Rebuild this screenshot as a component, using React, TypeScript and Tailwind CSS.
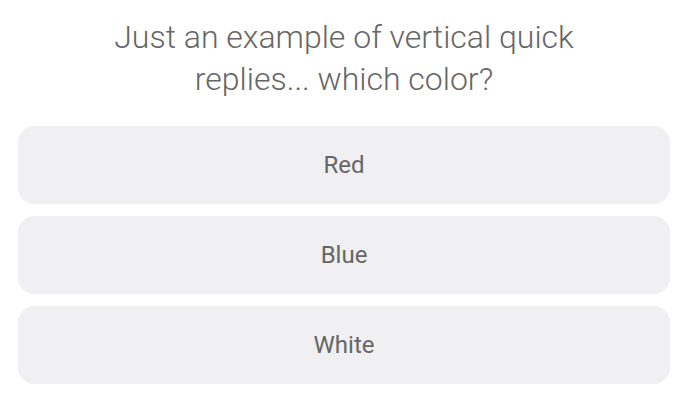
export default function App() {
  const options = ["Red", "Blue", "White"];
  return (
    <div className="w-[692px] h-[420px] bg-white font-['Roboto',sans-serif]">
      <div className="pt-[16px] pl-[18px] pr-[22px]">
        <p className="mx-auto w-[480px] text-center text-[32px] leading-[42px] font-light text-[#666666]">
          Just an example of vertical quick replies... which color?
        </p>
        <div className="mt-[26px] flex flex-col gap-[12px]">
          {options.map((o) => (
            <button
              key={o}
              type="button"
              className="h-[78px] w-full rounded-[16px] bg-[#f0f0f2] text-[24px] text-[#666666]"
            >
              {o}
            </button>
          ))}
        </div>
      </div>
    </div>
  );
}
